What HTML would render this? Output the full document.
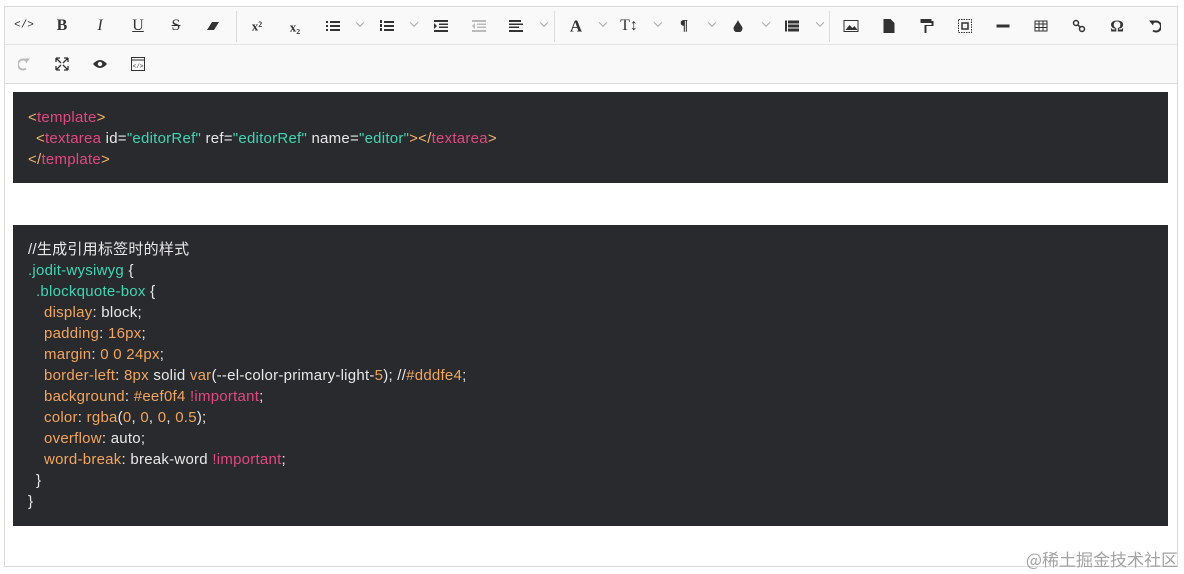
<!DOCTYPE html>
<html><head><meta charset="utf-8"><style>
*{margin:0;padding:0;box-sizing:border-box}
body{width:1184px;height:574px;background:#fff;position:relative;overflow:hidden;font-family:"Liberation Sans","Noto Sans CJK SC",sans-serif}
.box{position:absolute;left:4px;top:6px;width:1174px;height:561px;border:1px solid #dadada}
.tb{position:absolute;left:5px;top:7px;width:1172px;height:77px;background:#f9f9f9;border-bottom:1px solid #dadada}
.r1{position:absolute;left:0;top:37px;width:100%;border-top:1px solid #e3e3e3}
.ic{position:absolute;transform:translate(-50%,-50%);color:#333;font-size:15px;line-height:1;text-align:center;font-family:"Liberation Serif",serif}
.sep{position:absolute;top:4px;width:1px;height:31px;background:#dcdcdc}
.ch{position:absolute;transform:translate(-50%,-50%);width:6px;height:6px;border-right:1px solid #aaa;border-bottom:1px solid #aaa;rotate:45deg}
.code{position:absolute;left:13px;width:1155px;background:#282a2e;color:#e8e8e8;font-size:15px;letter-spacing:0.25px;line-height:21px;padding-left:15px;white-space:pre}
.p{color:#e2487f}.o{color:#f0b56b}.s{color:#3ed6b3}.t{color:#3ed6b3}.k{color:#f3a55c}
.i1{display:inline-block;width:8px}.i2{display:inline-block;width:16px}
.wm{position:absolute;right:6px;top:546px;color:#a3a3a3;font-size:17px;font-family:"Noto Sans CJK SC",sans-serif}
</style></head><body>
<div class="box"></div>
<div class="tb"><div class="r1"></div>
<div class="sep" style="left:231px"></div><div class="sep" style="left:549px"></div><div class="sep" style="left:824px"></div>
</div>
<div class="ic" style="left:24px;top:26px;font-size:11px;font-family:'Liberation Mono'">&lt;/&gt;</div>
<div class="ic" style="left:62px;top:26px;font-weight:bold;font-size:16px">B</div>
<div class="ic" style="left:100px;top:26px;font-style:italic;font-size:16px">I</div>
<div class="ic" style="left:138px;top:26px;text-decoration:underline;font-size:16px">U</div>
<div class="ic" style="left:176px;top:26px;text-decoration:line-through;font-size:16px">S</div>
<svg class="ic" style="left:213px;top:26px" width="14" height="10"><path d="M1 9L6 1H13L8 9Z" fill="#333"/></svg>
<div class="ic" style="left:257px;top:26px;font-weight:bold;font-size:13px">x²</div>
<div class="ic" style="left:295px;top:27px;font-weight:bold;font-size:13px">x₂</div>
<svg class="ic" style="left:333px;top:26px" width="14" height="12"><path d="M0 1h2v2H0zM0 5h2v2H0zM0 9h2v2H0zM4 1h10v2H4zM4 5h10v2H4zM4 9h10v2H4z" fill="#333"/></svg>
<div class="ch" style="left:357px;top:24px"></div>
<svg class="ic" style="left:387px;top:26px" width="14" height="12"><path d="M0 0h2v3H0zM0 4h2v3H0zM0 8h2v3H0zM4 1h10v2H4zM4 5h10v2H4zM4 9h10v2H4z" fill="#333"/></svg>
<div class="ch" style="left:411px;top:24px"></div>
<svg class="ic" style="left:441px;top:26px" width="14" height="12"><path d="M0 0h14v2H0zM5 3.5h9v1.5H5zM5 6.5h9v1.5H5zM0 10h14v2H0zM0 3l3 3-3 3z" fill="#333"/></svg>
<svg class="ic" style="left:479px;top:26px" width="14" height="12"><path d="M0 0h14v2H0zM5 3.5h9v1.5H5zM5 6.5h9v1.5H5zM0 10h14v2H0zM3 3L0 6l3 3z" fill="#bbb"/></svg>
<svg class="ic" style="left:516px;top:26px" width="14" height="12"><path d="M0 0h12v2H0zM0 3.5h14v1.5H0zM0 6.5h10v1.5H0zM0 10h14v2H0z" fill="#333"/></svg>
<div class="ch" style="left:541px;top:24px"></div>
<div class="ic" style="left:576px;top:26px;font-weight:bold;font-size:17px">A</div>
<div class="ch" style="left:600px;top:24px"></div>
<div class="ic" style="left:629px;top:26px;font-size:16px">T↕</div>
<div class="ch" style="left:655px;top:24px"></div>
<div class="ic" style="left:684px;top:26px;font-weight:bold;font-size:15px">¶</div>
<div class="ch" style="left:709px;top:24px"></div>
<svg class="ic" style="left:738px;top:26px" width="9" height="12"><path d="M4.5 0C3 4 0 6 0 8.5A4.5 4 0 0 0 9 8.5C9 6 6 4 4.5 0Z" fill="#333"/></svg>
<div class="ch" style="left:763px;top:24px"></div>
<svg class="ic" style="left:792px;top:26px" width="14" height="11"><path d="M0 0h2v11H0zM3 0h11v3H3zM3 4h11v3H3zM3 8h11v3H3z" fill="#333"/></svg>
<div class="ch" style="left:817px;top:24px"></div>
<svg class="ic" style="left:851px;top:26px" width="15" height="12"><rect x=".5" y=".5" width="14" height="11" fill="none" stroke="#333"/><path d="M2 10l4-5 3 3 2-2 3 4z" fill="#333"/></svg>
<svg class="ic" style="left:889px;top:26px" width="11" height="14"><path d="M0 0h7l4 4v10H0z" fill="#333"/></svg>
<svg class="ic" style="left:927px;top:26px" width="13" height="14"><path d="M0 0h11v4H0zM11 2h2v5H6v7H4V6h7z" fill="#333"/></svg>
<svg class="ic" style="left:965px;top:26px" width="14" height="14"><rect x=".5" y=".5" width="13" height="13" fill="none" stroke="#333" stroke-dasharray="1.5 1"/><rect x="4" y="4" width="6" height="6" fill="none" stroke="#333" stroke-width="1.5"/></svg>
<div class="ic" style="left:1003px;top:26px;width:13px;height:3px;background:#333"></div>
<svg class="ic" style="left:1041px;top:26px" width="13" height="11"><path d="M.5.5h12v10H.5zM.5 3.5h12M.5 7h12M4.5.5v10M8.5.5v10" fill="none" stroke="#333"/></svg>
<svg class="ic" style="left:1079px;top:26px" width="13" height="13"><circle cx="3.5" cy="3.5" r="2.5" fill="none" stroke="#333" stroke-width="1.5"/><circle cx="9.5" cy="9.5" r="2.5" fill="none" stroke="#333" stroke-width="1.5"/><path d="M5 5l3 3" stroke="#333" stroke-width="1.5"/></svg>
<div class="ic" style="left:1117px;top:26px;font-size:17px;font-weight:bold">Ω</div>
<svg class="ic" style="left:1155px;top:26px" width="12" height="13"><path d="M3 4A5 5 0 1 1 4 11" fill="none" stroke="#333" stroke-width="2"/><path d="M0 1l5 0-1 5z" fill="#333"/></svg>
<svg class="ic" style="left:24px;top:64px" width="12" height="13"><path d="M9 4A5 5 0 1 0 8 11" fill="none" stroke="#bbb" stroke-width="2"/><path d="M12 1l-5 0 1 5z" fill="#bbb"/></svg>
<svg class="ic" style="left:62px;top:64px" width="14" height="14"><path d="M1 1l5 5M13 1L8 6M1 13l5-5M13 13L8 8M1 1h4M1 1v4M13 1h-4M13 1v4M1 13h4M1 13v-4M13 13h-4M13 13v-4" stroke="#333" stroke-width="1.3" fill="none"/></svg>
<svg class="ic" style="left:100px;top:64px" width="14" height="10"><path d="M0 5Q7-3 14 5Q7 13 0 5Z" fill="#333"/><circle cx="7" cy="5" r="2.2" fill="#f9f9f9"/></svg>
<svg class="ic" style="left:138px;top:64px" width="14" height="14"><rect x=".5" y=".5" width="13" height="13" fill="none" stroke="#333"/><path d="M.5 3h13" stroke="#333"/><text x="7" y="11" font-size="6" text-anchor="middle" fill="#333" font-family="Liberation Mono">&lt;/&gt;</text></svg>

<div class="code" style="top:92px;height:91px;padding-top:15px"><span class="o">&lt;</span><span class="p">template</span><span class="o">&gt;</span>
<span class="i1"></span><span class="o">&lt;</span><span class="p">textarea</span> id=<span class="s">"editorRef"</span> ref=<span class="s">"editorRef"</span> name=<span class="s">"editor"</span><span class="o">&gt;&lt;/</span><span class="p">textarea</span><span class="o">&gt;</span>
<span class="o">&lt;/</span><span class="p">template</span><span class="o">&gt;</span></div>

<div class="code" style="top:225px;height:301px;padding-top:14px">//生成引用标签时的样式
<span class="t">.jodit-wysiwyg</span> {
<span class="i1"></span><span class="t">.blockquote-box</span> {
<span class="i2"></span><span class="k">display</span>: block;
<span class="i2"></span><span class="k">padding</span>: <span class="k">16px</span>;
<span class="i2"></span><span class="k">margin</span>: <span class="k">0 0 24px</span>;
<span class="i2"></span><span class="k">border-left</span>: <span class="k">8px</span> solid <span class="k">var</span>(--el-color-primary-light-<span class="k">5</span>); //<span class="k">#dddfe4</span>;
<span class="i2"></span><span class="k">background</span>: <span class="k">#eef0f4</span> <span class="p">!important</span>;
<span class="i2"></span><span class="k">color</span>: <span class="k">rgba</span>(<span class="k">0</span>, <span class="k">0</span>, <span class="k">0</span>, <span class="k">0.5</span>);
<span class="i2"></span><span class="k">overflow</span>: auto;
<span class="i2"></span><span class="k">word-break</span>: break-word <span class="p">!important</span>;
<span class="i1"></span>}
}</div>
<div class="wm">@稀土掘金技术社区</div>
</body></html>
